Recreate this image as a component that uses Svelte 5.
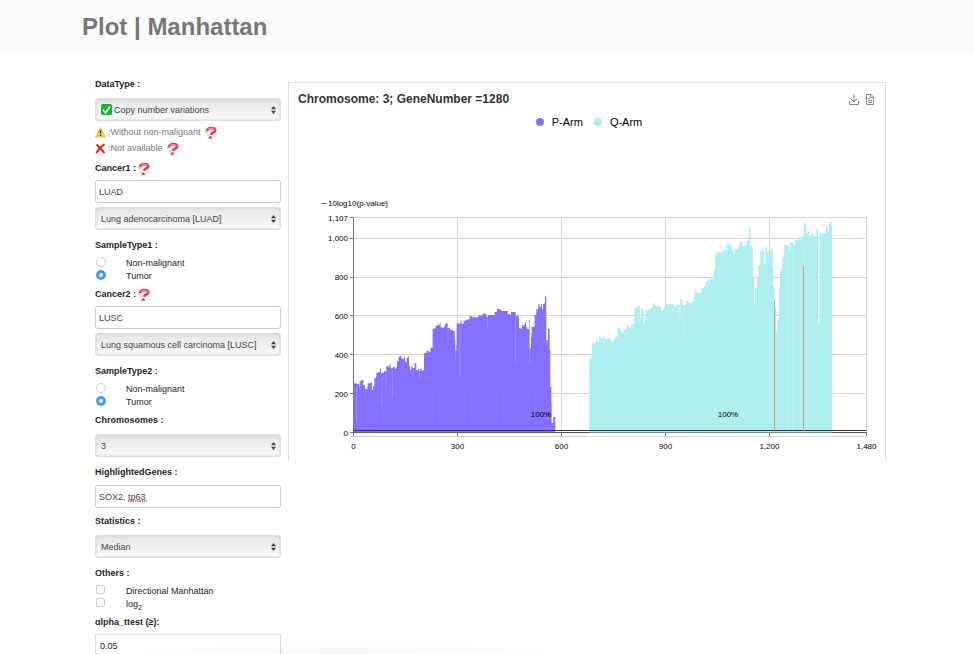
<script>
  const hints = [
    { kind: 'warn', text: ':Without non-malignant' },
    { kind: 'cross', text: ':Not available' },
  ];

  let sample1 = $state('tumor');
  let sample2 = $state('tumor');
  let cancer1 = $state('LUAD');
  let cancer2 = $state('LUSC');
  let genes = $state('SOX2, tp63');
  let alpha = $state('0.05');

  // Plot area inside the SVG, and its two linear scales
  const plot = { left: 64.5, right: 577.5, top: 27.5, bottom: 242.5 };
  const sx = (v) => plot.left + (v / 1480) * (plot.right - plot.left);
  const sy = (v) => plot.bottom - (v / 1107) * (plot.bottom - plot.top);
  const crisp = (n) => Math.floor(n) + 0.5;

  const xTicks = [0, 300, 600, 900, 1200, 1480];
  const yTicks = [0, 200, 400, 600, 800, 1000, 1107];
  const fmt = (n) => n.toLocaleString('en-US');

  // Envelopes of the bars of each arm, as x,y pairs on a grid of thirds of a unit
  const pArm = '132,280 140,282 148,292 149,274 154,270 160,285 165,297 172,290 173,280 184,276 186,300 189,288 192,286 193,265 198,262 199,248 205,246 210,236 213,250 216,248 222,243 226,245 229,228 235,232 238,224 242,235 248,231 255,237 258,232 261,212 264,214 266,200 270,197 274,204 278,208 282,200 285,215 288,218 290,203 295,198 297,228 300,240 304,230 308,234 314,220 319,240 324,237 328,243 331,236 335,242 340,240 342,190 346,188 350,183 358,187 361,175 364,172 367,174 368,116 373,115 377,107 383,104 390,100 392,112 397,114 402,110 405,101 410,99 413,114 418,112 420,119 428,123 433,122 434,150 436,180 439,165 440,100 448,102 451,94 455,101 461,92 467,89 475,88 479,79 487,82 500,82 505,76 514,77 517,71 526,72 529,80 534,75 550,76 554,66 560,64 561,56 570,59 575,63 590,63 593,72 600,74 603,66 615,67 617,78 622,74 626,85 627,115 634,116 636,106 642,104 645,97 648,112 652,117 656,118 657,90 659,175 663,140 665,111 673,110 674,75 679,58 683,57 685,42 689,50 693,42 696,58 699,42 703,38 705,17 708,22 709,150 713,155 714,117 718,118 719,180 721,290 724,340 725,398 729,398 730,381 734,381'.split(' ');
  const qArm = '28,480 31,478 32,470 35,470 36,430 44,428 46,422 53,425 57,408 61,413 66,415 68,412 76,417 82,413 86,415 88,404 91,422 96,420 98,424 102,415 107,410 112,408 113,384 118,386 121,393 127,401 130,391 136,390 140,376 146,382 151,380 154,373 162,375 163,324 168,322 170,318 179,318 180,352 183,352 184,328 190,328 191,371 193,371 194,332 203,328 213,322 217,323 218,310 224,318 228,322 230,316 236,320 241,320 243,332 249,330 251,322 257,322 258,313 274,312 280,318 290,315 298,315 299,351 300,351 301,298 306,302 308,316 315,314 319,304 325,308 337,305 341,290 343,276 347,264 349,278 362,278 365,264 371,260 376,245 381,240 386,252 389,238 394,232 399,240 401,212 404,208 406,160 412,155 420,158 425,155 429,149 437,149 440,133 444,130 447,137 451,142 453,134 456,150 460,163 464,148 472,146 475,140 478,127 484,124 487,138 492,136 496,120 498,138 500,122 505,110 507,82 509,82 511,138 517,144 519,230 521,232 522,315 524,315 525,264 530,262 531,232 534,230 535,195 540,195 541,153 547,144 549,160 551,135 553,190 555,189 556,142 559,144 561,155 564,152 566,166 570,164 571,147 577,142 578,200 580,260 583,260 584,320 587,325 588,395 591,395 592,360 595,358 597,265 599,262 600,212 606,212 607,172 612,172 613,135 625,137 628,155 630,127 636,127 640,136 644,120 655,118 659,111 668,108 671,70 674,65 677,80 679,99 683,96 685,90 688,108 691,101 696,103 700,108 708,104 709,86 713,84 714,370 717,370 718,98 723,97 725,101 734,98 738,80 742,82 744,97 747,68 751,66 755,80'.split(' ');

  // Turns the pairs into a stepped area that closes on the zero line
  function area(points, baseline) {
    let d = '';
    points.forEach((p, i) => {
      const [x, y] = p.split(',');
      d += i === 0 ? `M${x},${baseline}V${y}` : `H${x}V${y}`;
    });
    return `${d}h2V${baseline}Z`;
  }

  const pStreaks = [[139, 292, 390], [216, 260, 348], [228, 255, 308], [247, 240, 322], [328, 240, 266], [414, 112, 164], [437, 140, 214], [450, 105, 262], [533, 80, 118], [617, 80, 217], [659, 130, 217], [711, 60, 160]];
  const qStreaks = [[70, 415, 440], [312, 320, 405], [341, 300, 493], [429, 150, 190], [556, 150, 205], [672, 130, 690], [626, 150, 690], [638, 150, 690]];
  const pLines = Array.from({ length: 30 }, (_, i) => 142 + i * 19);
</script>

{#snippet help()}
  <svg class="help" viewBox="0 0 12 14" aria-hidden="true">
    <path d="M1.800 5.500C2.300 3.200 4.200 2.200 6.500 2.200c2.300 0 3.700.7 3.700 2.300C10.200 6.500 6.500 6.400 5.900 8.800" fill="none" stroke="#ee4052" stroke-width="2.800" />
    <path d="M3 3.900C4 2.800 5.200 2.600 6.500 2.600c1.500 0 2.600.4 2.800 1.400" fill="none" stroke="#ff8c98" stroke-width="1.200" />
    <circle cx="1.600" cy="6" r="1.200" fill="#e8c3a4" />
    <circle cx="3" cy="9" r="1" fill="#e8c3a4" />
    <circle cx="5.300" cy="11.500" r="1.500" fill="#e34a56" />
    <path d="M4 12l-.4 1.600M6.500 12l.3 1.600" stroke="#c9a184" stroke-width="1" />
  </svg>
{/snippet}

{#snippet arrows()}
  <svg class="arrows" viewBox="0 0 5 8" aria-hidden="true">
    <path d="M2.500 0L5 3.200H0zM2.500 8L0 4.800h5z" fill="#444" />
  </svg>
{/snippet}

<div class="page">
  <header><h1>Plot | Manhattan</h1></header>

  <main>
    <form>
      <label class="name" for="datatype">DataType :</label>
      <div class="pick marked">
        <svg class="tick" viewBox="0 0 11 11" aria-hidden="true">
          <rect width="11" height="11" rx="1.500" fill="#18b52c" />
          <path d="M2 5.700l2.600 3L9 2.500" fill="none" stroke="#fff" stroke-width="1.700" />
        </svg>
        <select id="datatype"><option>Copy number variations</option></select>
        {@render arrows()}
      </div>
      <ul class="hints">
        {#each hints as hint}
          <li>
            {#if hint.kind === 'warn'}
              <svg class="mark" viewBox="0 0 11 11" aria-hidden="true">
                <path d="M5.500.8L10.500 10H.5z" fill="#fbd034" stroke="#e3b52c" stroke-width=".8" stroke-linejoin="round" />
                <path d="M5.500 3.500v3.200M5.500 7.800v1.200" stroke="#222" stroke-width="1.300" />
              </svg>
            {:else}
              <svg class="mark" viewBox="0 0 11 11" aria-hidden="true">
                <path d="M1.500 1.500C4 4 7 7 9.500 10M9.500 1C6 4 3.500 6.500 1.300 10" fill="none" stroke="#e0200f" stroke-width="2" />
              </svg>
            {/if}
            <span>{hint.text}</span>
            {@render help()}
          </li>
        {/each}
      </ul>

      <label class="name" for="cancer1">Cancer1 :{@render help()}</label>
      <input class="text" id="cancer1" type="text" bind:value={cancer1} />
      <div class="pick">
        <select aria-label="Cancer 1 type"><option>Lung adenocarcinoma [LUAD]</option></select>
        {@render arrows()}
      </div>

      <fieldset>
        <legend class="name">SampleType1 :</legend>
        <label class="choice"><input type="radio" value="normal" bind:group={sample1} />Non-malignant</label>
        <label class="choice"><input type="radio" value="tumor" bind:group={sample1} />Tumor</label>
      </fieldset>

      <label class="name" for="cancer2">Cancer2 :{@render help()}</label>
      <input class="text" id="cancer2" type="text" bind:value={cancer2} />
      <div class="pick">
        <select aria-label="Cancer 2 type"><option>Lung squamous cell carcinoma [LUSC]</option></select>
        {@render arrows()}
      </div>

      <fieldset>
        <legend class="name">SampleType2 :</legend>
        <label class="choice"><input type="radio" value="normal" bind:group={sample2} />Non-malignant</label>
        <label class="choice"><input type="radio" value="tumor" bind:group={sample2} />Tumor</label>
      </fieldset>

      <label class="name" for="chromosomes">Chromosomes :</label>
      <div class="pick">
        <select id="chromosomes"><option>3</option></select>
        {@render arrows()}
      </div>

      <label class="name" for="genes">HighlightedGenes :</label>
      <div class="spelled">
        <input class="text" id="genes" type="text" spellcheck="false" bind:value={genes} />
        <svg class="squiggle" viewBox="0 0 19 2" aria-hidden="true">
          <path d="M0 1h19" stroke="#f04438" stroke-width="1.500" stroke-dasharray="1.500 .8" />
        </svg>
      </div>

      <label class="name" for="statistics">Statistics :</label>
      <div class="pick">
        <select id="statistics"><option>Median</option></select>
        {@render arrows()}
      </div>

      <fieldset>
        <legend class="name">Others :</legend>
        <label class="choice"><input type="checkbox" />Directional Manhattan</label>
        <label class="choice"><input type="checkbox" /><span>log<sub>2</sub></span></label>
      </fieldset>

      <label class="name" for="alpha">ɑlpha_ttest (≥):</label>
      <input class="text plain" id="alpha" type="text" bind:value={alpha} />
    </form>

    <section class="panel">
      <div class="head">
        <h2>Chromosome: 3; GeneNumber =1280</h2>
        <div class="tools">
          <button type="button" aria-label="Save as image">
            <svg viewBox="0 0 10 11"><path d="M5 0v8M2 5l3 3 3-3M.5 7v3.500h9V7" /></svg>
          </button>
          <button type="button" aria-label="Data view">
            <svg viewBox="0 0 10 11"><path d="M1.500.5h4.500l2.500 2.500v7.500h-7zM5.500.5v3h3M3 4.500h2M3 6.500h4M3 8.500h4" /></svg>
          </button>
        </div>
      </div>
      <ul class="legend">
        <li><i class="dot p"></i>P-Arm</li>
        <li><i class="dot q"></i>Q-Arm</li>
      </ul>

      <svg class="chart" viewBox="0 0 596 271" role="img" aria-label="Manhattan plot of chromosome 3">
        <g class="grid">
          {#each xTicks.slice(1) as t}
            <line x1={crisp(sx(t))} x2={crisp(sx(t))} y1={plot.top} y2={plot.bottom} />
          {/each}
          {#each yTicks.slice(1) as t}
            <line x1={plot.left} x2={plot.right} y1={crisp(sy(t))} y2={crisp(sy(t))} />
          {/each}
          <line x1="62" x2={plot.right} y1="246.5" y2="246.5" />
        </g>

        <g class="axis">
          <line x1={plot.left} x2={plot.left} y1={plot.top} y2="246" />
          <line x1={plot.left} x2={plot.right} y1={plot.bottom} y2={plot.bottom} />
          {#each xTicks as t}
            <line x1={crisp(sx(t))} x2={crisp(sx(t))} y1={plot.bottom} y2="246" />
          {/each}
          {#each yTicks as t}
            <line x1="61" x2={plot.left} y1={crisp(sy(t))} y2={crisp(sy(t))} />
          {/each}
        </g>

        <g transform="translate(21 100) scale(.3333)">
          <path class="arm-p" d={area(pArm, 429)} />
          {#each pLines as x}
            <line class="seam" x1={x} x2={x} y1="290" y2="428" />
          {/each}
          {#each pStreaks as [x, a, b]}
            <line class="streak" x1={x} x2={x} y1={a} y2={b} />
          {/each}
        </g>
        <g transform="translate(291 10) scale(.3333)">
          <path class="arm-q" d={area(qArm, 699)} />
          {#each qStreaks as [x, a, b]}
            <line class="streak" x1={x} x2={x} y1={a} y2={b} />
          {/each}
        </g>

        <line class="threshold" x1={plot.left} x2={plot.right} y1="240.5" y2="240.5" />
        <line class="threshold low" x1={plot.left} x2={plot.right} y1="242.5" y2="242.5" />
        <line class="gene" x1="485.5" x2="485.5" y1="111" y2="243" />
        <line class="gene" x1="514.5" x2="514.5" y1="76" y2="243" />

        <g class="labels">
          <text x="31" y="16">－10log10(p-value)</text>
          {#each yTicks as t}
            <text x="59" y={Math.round(sy(t)) + 3} text-anchor="end">{fmt(t)}</text>
          {/each}
          {#each xTicks as t}
            <text x={sx(t)} y="259" text-anchor="middle">{fmt(t)}</text>
          {/each}
          <text x="252" y="227" text-anchor="middle">100%</text>
          <text x="439" y="227" text-anchor="middle">100%</text>
        </g>
      </svg>
    </section>
  </main>

  <div class="glow"></div>
</div>

<style>
  :global(body) {
    background: #fff;
  }
  .page {
    position: relative;
    height: 100vh;
    overflow: hidden;
    font: 9px/16px "Liberation Sans", "Noto Sans CJK SC", sans-serif;
    color: #222;
  }
  header {
    padding: 11px 82px 10px;
    background: #fafafa;
  }
  h1 {
    margin: 0;
    font-size: 24px;
    line-height: 32px;
    color: #777;
  }
  main {
    display: grid;
    grid-template-columns: 186px minmax(0, 1fr);
    align-items: start;
    gap: 7px;
    padding: 23px 88px 0 95px;
  }
  ul {
    margin: 0;
    padding: 0;
    list-style: none;
  }

  form {
    display: flex;
    flex-direction: column;
  }
  .name {
    display: flex;
    height: 16px;
    padding: 0;
    font-weight: bold;
    color: #222;
  }
  .name + .pick {
    margin-top: 6px;
  }
  .name + .text,
  .name + .spelled {
    margin-top: 4px;
  }
  .name + .spelled {
    margin-top: 5px;
  }
  .pick,
  .spelled {
    position: relative;
    margin-bottom: 7px;
  }
  .spelled {
    margin-bottom: 5px;
  }
  .pick.marked {
    margin-bottom: 3px;
  }
  select,
  .text {
    display: block;
    box-sizing: border-box;
    width: 100%;
    height: 23px;
    margin: 0;
    font: inherit;
    color: #444;
    border: 1px solid #ccc;
    border-radius: 3px;
    outline: none;
  }
  select {
    appearance: none;
    padding: 0 14px 0 5px;
    border-color: #dcdcdc;
    background: linear-gradient(#e4e4e4, #fafafa);
    box-shadow: inset 0 0 3px #ccc;
  }
  .marked select {
    padding-left: 18px;
  }
  .tick {
    position: absolute;
    left: 6px;
    top: 6px;
    width: 11px;
    height: 11px;
  }
  .arrows {
    position: absolute;
    right: 5px;
    top: 8px;
    width: 5px;
    height: 8px;
  }
  .text {
    padding: 0 3px;
    background: #fff;
  }
  .text + .pick {
    margin-top: 4px;
  }
  .text.plain {
    padding: 0 4px;
    border-color: #ddd;
    border-radius: 0;
    color: #222;
  }
  .squiggle {
    position: absolute;
    left: 33px;
    bottom: 6px;
    width: 19px;
    height: 2px;
  }
  .hints {
    margin-bottom: 4px;
    color: #777;
  }
  .hints li {
    display: flex;
    align-items: center;
    gap: 2px;
    height: 16px;
  }
  .mark {
    width: 11px;
    height: 11px;
  }
  .help {
    width: 12px;
    height: 14px;
    margin: 2px 0 0 2px;
  }

  fieldset {
    min-width: 0;
    margin: 0 0 4px;
    padding: 0;
    border: 0;
  }
  legend {
    margin-bottom: 3px;
  }
  .choice {
    display: flex;
    gap: 20px;
    height: 13px;
    line-height: 14px;
  }
  .choice input {
    appearance: none;
    box-sizing: border-box;
    width: 10px;
    height: 10px;
    margin: 1px 0 0 1px;
    border: 1px solid #ccc;
    background: #fff;
  }
  .choice input[type="radio"] {
    border-radius: 50%;
  }
  .choice input[type="radio"]:checked {
    border: 3px solid #3b99fc;
  }
  .choice input[type="checkbox"] {
    width: 9px;
    height: 9px;
    margin-right: 1px;
    border-radius: 2px;
  }
  sub {
    font-size: 7px;
    line-height: 0;
  }

  .panel {
    margin-top: 6px;
    border: 1px solid #ddd;
    border-bottom: 0;
    color: #333;
  }
  .head {
    display: flex;
    justify-content: space-between;
    align-items: center;
    padding: 8px 10px 0 9px;
  }
  h2 {
    margin: 0;
    font-size: 12px;
    line-height: 16px;
  }
  .tools {
    display: flex;
    gap: 6px;
  }
  .tools button {
    width: 10px;
    height: 11px;
    padding: 0;
    border: 0;
    background: none;
  }
  .tools svg {
    display: block;
    fill: none;
    stroke: #777;
    stroke-width: 0.9;
  }
  .legend {
    display: flex;
    justify-content: center;
    gap: 11px;
    margin-top: 7px;
    padding: 0 0 60px 4px;
    font-size: 11px;
    color: #000;
  }
  .legend li {
    display: flex;
    align-items: center;
    gap: 8px;
  }
  .dot {
    width: 8px;
    height: 8px;
    border-radius: 50%;
  }
  .dot.p {
    background: #8470ff;
  }
  .dot.q {
    background: #afeeee;
  }

  .chart {
    display: block;
    width: 100%;
  }
  .grid line {
    stroke: #d4d4d4;
  }
  .axis line {
    stroke: #777;
  }
  .arm-p {
    fill: #8470ff;
  }
  .arm-q {
    fill: #afeeee;
  }
  .streak {
    stroke: #fff;
    stroke-width: 2;
    opacity: 0.3;
  }
  .seam {
    stroke: #fff;
    stroke-width: 1;
    opacity: 0.08;
  }
  .threshold {
    stroke: #333;
  }
  .threshold.low {
    opacity: 0.5;
  }
  .gene {
    stroke: #e9906e;
  }
  .labels {
    font-size: 8px;
    fill: #000;
  }

  .glow {
    position: absolute;
    left: 14%;
    right: 43%;
    bottom: 0;
    height: 10px;
    background: radial-gradient(ellipse at bottom, rgba(0, 0, 0, 0.05), transparent 70%);
    pointer-events: none;
  }
</style>
